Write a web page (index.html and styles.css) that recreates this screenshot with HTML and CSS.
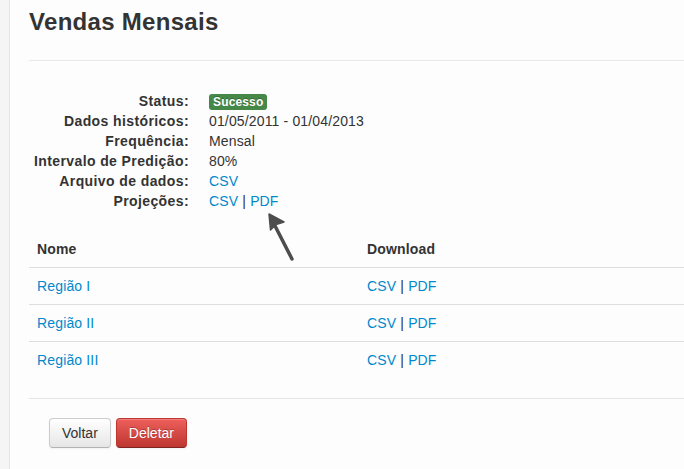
FILE: index.html
```html
<!DOCTYPE html>
<html lang="pt">
<head>
<meta charset="utf-8">
<title>Vendas Mensais</title>
<link rel="stylesheet" href="styles.css">
</head>
<body>
<div class="layout">
  <aside class="side"></aside>
  <main class="main">
    <h1 class="title">Vendas Mensais</h1>
    <hr class="rule">
    <dl class="info">
      <dt>Status:</dt>
      <dd><span class="label-success">Sucesso</span></dd>
      <dt>Dados históricos:</dt>
      <dd>01/05/2011 - 01/04/2013</dd>
      <dt>Frequência:</dt>
      <dd>Mensal</dd>
      <dt>Intervalo de Predição:</dt>
      <dd>80%</dd>
      <dt>Arquivo de dados:</dt>
      <dd><a href="#">CSV</a></dd>
      <dt>Projeções:</dt>
      <dd><a href="#">CSV</a> | <a href="#">PDF</a></dd>
    </dl>
    <table class="table">
      <thead>
        <tr><th class="col-name">Nome</th><th>Download</th></tr>
      </thead>
      <tbody>
        <tr><td><a href="#">Região I</a></td><td><a href="#">CSV</a> | <a href="#">PDF</a></td></tr>
        <tr><td><a href="#">Região II</a></td><td><a href="#">CSV</a> | <a href="#">PDF</a></td></tr>
        <tr><td><a href="#">Região III</a></td><td><a href="#">CSV</a> | <a href="#">PDF</a></td></tr>
      </tbody>
    </table>
    <div class="form-actions">
      <button class="btn">Voltar</button>
      <button class="btn btn-danger">Deletar</button>
    </div>
    <svg class="arrow" width="40" height="56" viewBox="0 0 40 56" aria-hidden="true">
      <line x1="32" y1="51" x2="12" y2="12" stroke="#4d4d4d" stroke-width="3.5" stroke-linecap="round"/>
      <path d="M9 6 L10.5 22 L13.5 19 L16 16.5 L24 14 Z" fill="#4d4d4d" stroke="#4d4d4d" stroke-width="1.5" stroke-linejoin="round"/>
    </svg>
  </main>
</div>
</body>
</html>
```
FILE: styles.css
```css
html, body {
  margin: 0;
  padding: 0;
}
body {
  font-family: "Liberation Sans", Arial, sans-serif;
  font-size: 14px;
  line-height: 20px;
  letter-spacing: 0.15px;
  color: #333;
  background: #fdfdfd;
  overflow: hidden;
}
.layout {
  display: flex;
  min-height: 469px;
}
.side {
  width: 9px;
  flex: none;
  background: #f5f5f5;
  border-right: 1px solid #e6e6e6;
}
.main {
  position: relative;
  flex: 1;
  padding-left: 19px;
  min-width: 0;
}
.title {
  margin: 2px 0 0;
  font-size: 24px;
  line-height: 40px;
  font-weight: bold;
  letter-spacing: 0.3px;
  color: #333;
}
.rule {
  margin: 18px 0 30px;
  border: 0;
  border-top: 1px solid #e8e8e8;
  height: 0;
}
.info {
  margin: 0 0 20px;
  display: grid;
  grid-template-columns: 160px 1fr;
  column-gap: 20px;
}
.info dt {
  font-weight: bold;
  text-align: right;
  white-space: nowrap;
  letter-spacing: 0.4px;
}
.info dd {
  margin: 0;
}
a {
  color: #0088cc;
  text-decoration: none;
}
.label-success {
  display: inline-block;
  background: #468847;
  color: #fff;
  font-size: 12px;
  font-weight: bold;
  line-height: 14px;
  padding: 1px 4px 1px;
  border-radius: 3px;
  text-shadow: 0 -1px 0 rgba(0,0,0,.25);
  vertical-align: baseline;
}
.table {
  width: 100%;
  border-collapse: collapse;
  margin-bottom: 20px;
}
.table th, .table td {
  padding: 8px;
  line-height: 20px;
  text-align: left;
  border-top: 1px solid #dddddd;
}
.table thead th {
  border-top: 0;
  font-weight: bold;
}
.col-name {
  width: 314px;
}
.form-actions {
  border-top: 1px solid #e5e5e5;
  padding: 19px 20px 20px;
}
.btn {
  display: inline-block;
  font-family: "Liberation Sans", Arial, sans-serif;
  font-size: 14px;
  line-height: 20px;
  padding: 4px 12px;
  color: #333;
  background: linear-gradient(#ffffff, #e6e6e6);
  border: 1px solid #cccccc;
  border-bottom-color: #b3b3b3;
  border-radius: 4px;
  box-shadow: inset 0 1px 0 rgba(255,255,255,.2), 0 1px 2px rgba(0,0,0,.05);
  margin: 0;
}
.btn + .btn {
  margin-left: 1px;
}
.btn-danger {
  color: #fff;
  background: linear-gradient(#ee5f5b, #bd362f);
  border-color: #bd362f #bd362f #802420;
  text-shadow: 0 -1px 0 rgba(0,0,0,.25);
}
.arrow {
  position: absolute;
  left: 250px;
  top: 208px;
}
```
